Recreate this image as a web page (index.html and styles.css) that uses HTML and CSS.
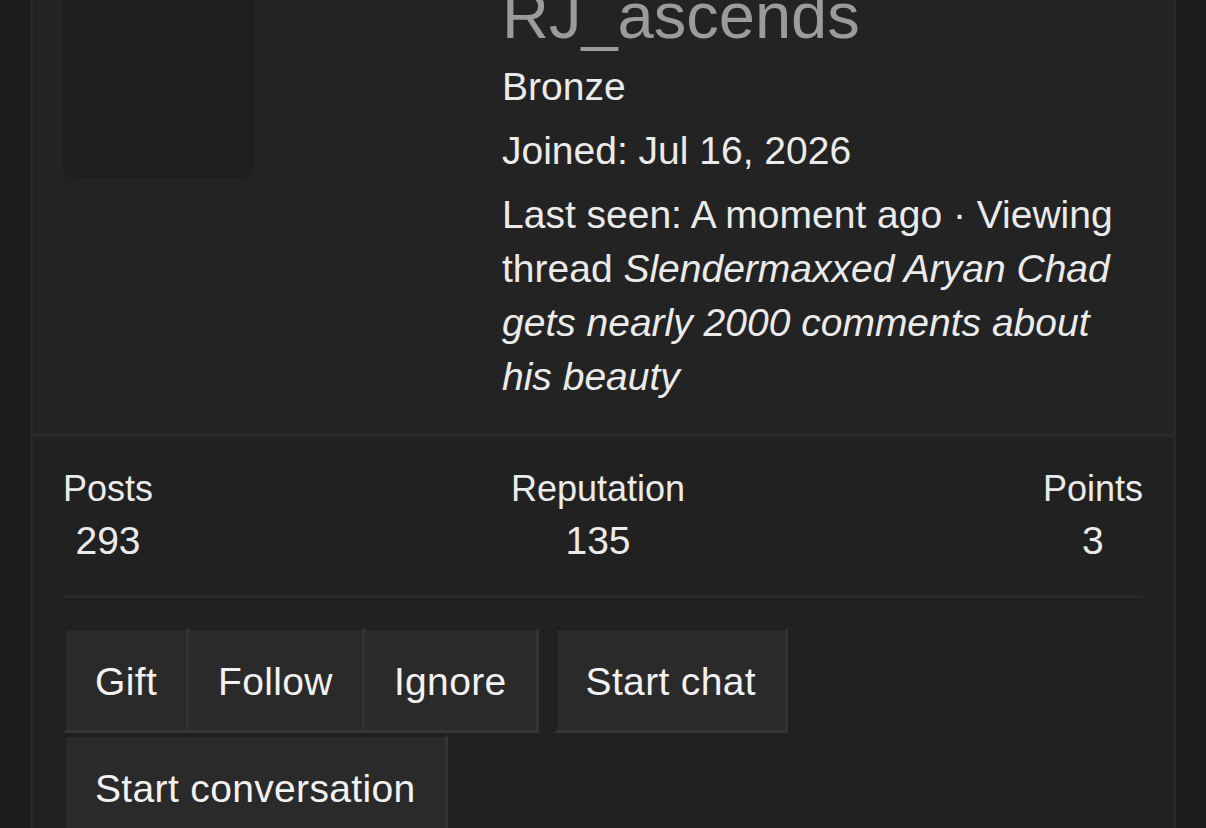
FILE: index.html
```html
<!DOCTYPE html>
<html lang="en">
<head>
  <meta charset="UTF-8" />
  <meta name="viewport" content="width=device-width, initial-scale=1.0"/>
  <title>RJ_ascends | Member</title>
  <link rel="stylesheet" href="styles.css">
</head>
<body>
  <div class="memberBlock">
    <div class="memberHeader">
      <div class="memberHeader-avatar"></div>
      <div class="memberHeader-main">
        <h1 class="memberHeader-name">RJ_ascends</h1>
        <div class="memberHeader-line">Bronze</div>
        <div class="memberHeader-line">Joined: Jul 16, 2026</div>
        <div class="memberHeader-line">
          Last seen: A moment ago · Viewing thread <em>Slendermaxxed Aryan Chad gets nearly 2000 comments about his beauty</em>
        </div>
      </div>
    </div>

    <div class="memberBody">
      <div class="stats">
        <dl class="stat">
          <dt>Posts</dt>
          <dd>293</dd>
        </dl>
        <dl class="stat">
          <dt>Reputation</dt>
          <dd>135</dd>
        </dl>
        <dl class="stat">
          <dt>Points</dt>
          <dd>3</dd>
        </dl>
      </div>

      <div class="actions">
        <div class="buttonGroup">
          <a class="button">Gift</a>
          <a class="button">Follow</a>
          <a class="button">Ignore</a>
        </div>
        <a class="button">Start chat</a>
        <a class="button">Start conversation</a>
      </div>
    </div>
  </div>
</body>
</html>
```

FILE: styles.css
```css
body {
  margin: 0;
  background: #1c1c1c;
  color: #ebebeb;
  font-family: "Liberation Sans", Arial, sans-serif;
  font-size: 39px;
  line-height: 54px;
}
.memberBlock {
  margin: -56px 30px 0 30px;
  border: 3px solid #282828;
  background: #212121;
}
.memberHeader {
  display: flex;
  gap: 248px;
  padding: 30px 29px 30px 29px;
  background: #232323;
  border-bottom: 3px solid #2a2a2a;
}
.memberHeader-avatar {
  flex: none;
  width: 192px;
  height: 192px;
  margin-top: 10px;
  background: #1f1f1f;
  border-radius: 12px;
  box-shadow: 0 1px 0 #262626;
}
.memberHeader-main {
  flex: 1;
}
.memberHeader-name {
  margin: 0 0 5px 0;
  font-size: 65px;
  line-height: 78px;
  font-weight: normal;
  color: #9b9b9b;
}
.memberHeader-line {
  margin-bottom: 10px;
}
.memberHeader-line:last-child {
  margin-bottom: 0;
}
.memberBody {
  padding: 27px 30px 40px 30px;
}
.stats {
  display: flex;
  justify-content: space-between;
  padding-bottom: 27px;
  border-bottom: 3px solid #2a2a2a;
}
.stat {
  margin: 0;
  text-align: center;
}
.stat dt {
  font-size: 36px;
  line-height: 50px;
}
.stat dd {
  margin: 0;
}
.actions {
  display: flex;
  flex-wrap: wrap;
  column-gap: 15px;
  row-gap: 1px;
  margin-top: 29px;
}
.buttonGroup {
  display: flex;
}
.button {
  display: block;
  padding: 25px 29px 21px 29px;
  background: #2a2a2a;
  color: #f2f2f2;
  letter-spacing: 0.35px;
  border: 3px solid;
  border-color: #1f1f1f #333333 #363636 #1f1f1f;
  cursor: pointer;
}
.buttonGroup .button + .button {
  border-left: 0;
}
```
